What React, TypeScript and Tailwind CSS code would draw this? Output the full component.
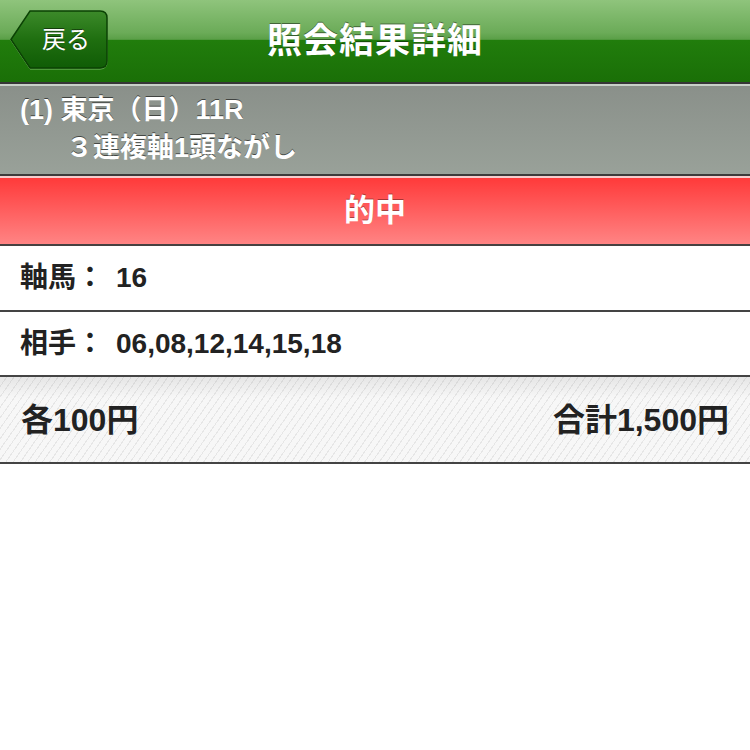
import React from 'react';

const FONT = "font-['Liberation_Sans','Noto_Sans_CJK_JP',sans-serif]";

function BackButton() {
  return (
    <button className="absolute left-[9px] top-[9px] w-[100px] h-[61px]">
      {/* arrow-shaped button body */}
      <svg className="absolute inset-0" width="100" height="61" viewBox="0 0 100 61">
        <defs>
          <linearGradient id="bk" x1="0" y1="0" x2="0" y2="1">
            <stop offset="0" stopColor="#3c8a2a" />
            <stop offset="0.5" stopColor="#1f6f10" />
            <stop offset="1" stopColor="#105c06" />
          </linearGradient>
        </defs>
        <path
          d="M2 30.5 L21 2 H91 Q98 2 98 9 V52 Q98 59 91 59 H21 Z"
          fill="none"
          stroke="#7cbf68"
          strokeWidth="1"
          transform="translate(0 1)"
        />
        <path
          d="M2 30.5 L21 2 H91 Q98 2 98 9 V52 Q98 59 91 59 H21 Z"
          fill="url(#bk)"
          stroke="#0b4204"
          strokeWidth="1.5"
        />
      </svg>
      <span className="relative block pl-[14px] text-[24px] leading-none text-white [text-shadow:0_-1px_0_rgba(0,0,0,0.5)]">
        戻る
      </span>
    </button>
  );
}

export default function App() {
  return (
    <div className={`w-[750px] h-[750px] bg-white ${FONT}`}>
      {/* nav bar */}
      <header className="relative h-[82px] flex items-center justify-center bg-[linear-gradient(to_bottom,#8fc47c_0%,#6bab58_40%,#5a9f47_48%,#217d0c_49%,#1a6f07_100%)]">
        <BackButton />
        <h1 className="text-[35px] font-bold text-white tracking-[1px] [text-shadow:0_-1px_0_rgba(0,0,0,0.45)]">
          照会結果詳細
        </h1>
      </header>
      <div className="h-[2px] bg-[#363636]" />
      <div className="h-[2px] bg-[#c9d1c9]" />

      {/* race info */}
      <section className="h-[88px] px-[20px] pt-[5px] bg-[linear-gradient(to_bottom,#8a908a,#99a199)] text-white font-bold text-[27px] leading-[38px] [text-shadow:0_-1px_0_rgba(0,0,0,0.55)]">
        <p>(1) 東京（日）11R</p>
        <p className="pl-[46px]">３連複軸1頭ながし</p>
      </section>
      <div className="h-[2px] bg-[#3e3a3a]" />
      <div className="h-[2px] bg-[#f6cccc]" />

      {/* result */}
      <div className="h-[66px] flex items-center justify-center bg-[linear-gradient(to_bottom,#ff3a3a,#ff8484)] text-white text-[31px] font-bold [text-shadow:0_-1px_0_rgba(0,0,0,0.35)]">
        的中
      </div>
      <div className="h-[2px] bg-[#464141]" />

      {/* horses */}
      <div className="h-[64px] flex items-center px-[20px] text-[28px] font-bold text-[#222]">
        <span>軸馬：</span>
        <span className="ml-[12px]">16</span>
      </div>
      <div className="h-[2px] bg-[#444]" />
      <div className="h-[63px] flex items-center px-[20px] text-[28px] font-bold text-[#222]">
        <span>相手：</span>
        <span className="ml-[12px]">06,08,12,14,15,18</span>
      </div>
      <div className="h-[2px] bg-[#444]" />

      {/* amounts */}
      <div className="h-[85px] flex items-center justify-between px-[21px] text-[32px] font-bold text-[#222] bg-[linear-gradient(to_bottom,rgba(0,0,0,0.07),rgba(0,0,0,0)_25%),repeating-linear-gradient(125deg,#f7f7f7_0px,#f7f7f7_5px,#e6e6e6_5px,#e6e6e6_6px)]">
        <span>各100円</span>
        <span>合計1,500円</span>
      </div>
      <div className="h-[2px] bg-[#444]" />
    </div>
  );
}
